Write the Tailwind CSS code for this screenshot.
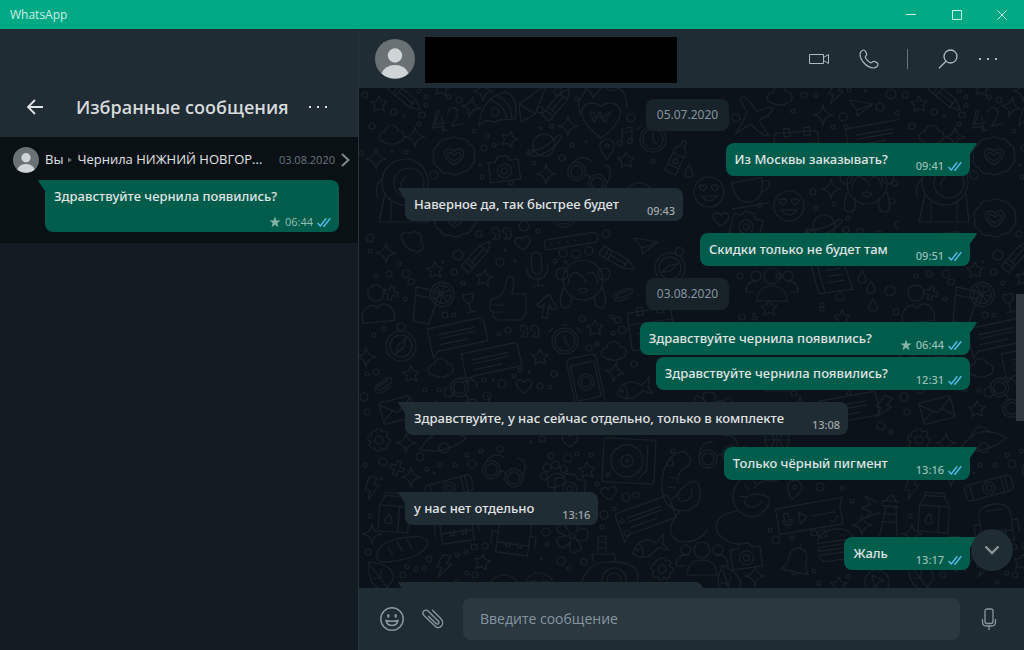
<!DOCTYPE html>
<html lang="ru">

<head>
    <meta charset="UTF-8">
    <meta name="viewport" content="width=device-width, initial-scale=1.0">
    <title>WhatsApp</title>
    <script src="https://cdn.jsdelivr.net/npm/@tailwindcss/browser@4"></script>
</head>

<body class="h-screen flex flex-col overflow-hidden bg-[#111b21] font-['Open_Sans','Noto_Sans',sans-serif] text-[#e1e4e6]">

    <!-- Общие иконки -->
    <svg class="hidden">
        <symbol id="ticks" viewBox="0 0 14 10">
            <path d="M.5 6 3.3 9 9.3 1.2M6.2 8.6 7 9.2 13.3 1.2" fill="none" stroke="#53bdeb" stroke-width="1.4" />
        </symbol>
        <symbol id="star" viewBox="0 0 12 12">
            <path d="M6 .5 7.4 4.5 11.6 4.6 8.3 7.1 9.5 11.2 6 8.8 2.5 11.2 3.7 7.1 .4 4.6 4.6 4.5Z" fill="#86b3a7" />
        </symbol>
        <symbol id="tail-in" viewBox="0 0 7 12">
            <path d="M7 0H1.5Q-.5 0 .6 1.6L7 11Z" fill="currentColor" />
        </symbol>
        <symbol id="tail-out" viewBox="0 0 7 12">
            <path d="M0 0H5.5Q7.5 0 6.4 1.6L0 11Z" fill="currentColor" />
        </symbol>
        <symbol id="avatar" viewBox="0 0 40 40">
            <circle cx="20" cy="16.500" r="7.200" fill="#cfd4d6" />
            <path d="M6.500 34.500Q10 26 20 26T33.500 34.500Q28 39.500 20 39.500T6.500 34.500Z" fill="#cfd4d6" />
        </symbol>
        <symbol id="dots" viewBox="0 0 18 4">
            <path d="M0 1H2V3H0ZM8 1H10V3H8ZM16 1H18V3H16Z" fill="currentColor" />
        </symbol>
    </svg>

    <!-- Заголовок окна -->
    <header class="h-[29px] shrink-0 flex items-center justify-between bg-[#00a884] pl-[10px] text-[#c9efe6]">
        <span class="text-xs">WhatsApp</span>
        <div class="flex items-center">
            <button aria-label="Свернуть" class="w-[46px] h-[29px] flex items-center justify-center">
                <svg width="10" height="10" fill="none" stroke="currentColor"><path d="M0 4.500H10" /></svg>
            </button>
            <button aria-label="Развернуть" class="w-[46px] h-[29px] flex items-center justify-center">
                <svg width="10" height="10" fill="none" stroke="currentColor"><path d="M.5 .5H9.500V9.500H.5Z" /></svg>
            </button>
            <button aria-label="Закрыть" class="w-[44px] h-[29px] flex items-center justify-center">
                <svg width="10" height="10" fill="none" stroke="currentColor"><path d="M.5 .5 9.500 9.500M9.500 .5 .5 9.500" /></svg>
            </button>
        </div>
    </header>

    <div class="flex-1 min-h-0 flex">

        <!-- Избранные сообщения -->
        <aside class="w-[359px] shrink-0 border-r border-[#28343b] flex flex-col bg-[#131c22]">
            <div class="h-[108px] flex items-end bg-[#202c33] pl-[23px] pr-[31px] pb-[18px]">
                <button aria-label="Назад" class="size-6 flex items-center justify-center">
                    <svg width="18" height="16" viewBox="0 0 18 16" fill="none" stroke="#e1e4e6" stroke-width="1.800"><path d="M17 8H2M9 1 2 8 9 15" /></svg>
                </button>
                <h1 class="flex-1 ml-[29px] text-lg leading-6 font-semibold whitespace-nowrap text-[#d6dadc]">Избранные сообщения</h1>
                <button aria-label="Меню" class="h-6 flex items-center"><svg class="w-[18px] h-1"><use href="#dots" /></svg></button>
            </div>

            <div class="bg-[#0a1114] pt-[10px] pb-[11px] pl-[13px] pr-2">
                <div class="flex items-center">
                    <svg class="size-[26px] shrink-0 rounded-full bg-[#6a7175]"><use href="#avatar" /></svg>
                    <span class="ml-[6px] text-[13px]">Вы</span>
                    <svg class="mx-[5px] shrink-0" width="4" height="6" fill="#667781"><path d="M0 .5 4 3 0 5.500Z" /></svg>
                    <span class="flex-1 truncate text-[13px] font-medium">Чернила НИЖНИЙ НОВГОР...</span>
                    <time class="ml-2 text-[11px] text-[#667781]">03.08.2020</time>
                    <svg class="ml-[6px] shrink-0" width="9" height="14" fill="none" stroke="#7d898f" stroke-width="2"><path d="M1 1 7.500 7 1 13" /></svg>
                </div>
                <div class="relative mt-[7px] ml-8 mr-[11px] h-[52px] flex flex-col justify-between rounded-lg rounded-tl-none bg-[#005c4b] pl-[9px] pr-2 pt-[6px] pb-[2px]">
                    <svg class="absolute -left-[7px] top-0 w-[7px] h-3 text-[#005c4b]"><use href="#tail-in" /></svg>
                    <p class="font-['Noto_Sans','Open_Sans',sans-serif] text-[13px] leading-5 font-medium whitespace-nowrap">Здравствуйте чернила появились?</p>
                    <div class="flex items-center justify-end gap-1 text-[11px] leading-4 font-medium text-[#99beb7]">
                        <svg class="size-3"><use href="#star" /></svg>06:44<svg class="w-[14px] h-[10px]"><use href="#ticks" /></svg>
                    </div>
                </div>
            </div>
        </aside>

        <!-- Чат -->
        <main class="flex-1 min-w-0 flex flex-col">
            <div class="h-[59px] shrink-0 flex items-center bg-[#202c33] pl-4 pr-[27px] text-[#aebac1]">
                <svg class="size-10 rounded-full bg-[#6a7175]"><use href="#avatar" /></svg>
                <div class="ml-[10px] mt-[3px] w-[252px] h-[46px] bg-black"></div>
                <div class="ml-auto flex items-center">
                    <button aria-label="Видеозвонок">
                        <svg width="20" height="12" fill="none" stroke="currentColor"><path d="M.5 1.500H14.500V10.500H.5ZM14.500 4.500 19.500 1.500V10.500L14.500 7.500" /></svg>
                    </button>
                    <button aria-label="Звонок" class="ml-[30px]">
                        <svg width="20" height="20" viewBox="0 0 20 20" fill="none" stroke="currentColor" stroke-width="1.200" stroke-linejoin="round"><path d="M4.500 1C3 1 1 3 1 5.500 1.500 12 8 18.500 14.500 19 17 19 19 17 19 15.500 19 14.500 18.500 14 17.800 13.600L15.500 12.500C14.500 12 14 12.300 13.200 13.200 12.500 14 12 14.200 11 13.500 9 12.200 7.500 10.700 6.500 9 5.900 8 6 7.600 7 6.800 7.800 6.200 8 5.500 7.500 4.500L6.400 2.200C6 1.500 5.500 1 4.500 1Z" /></svg>
                    </button>
                    <div class="ml-7 w-px h-5 bg-[#6a767d]"></div>
                    <button aria-label="Поиск" class="ml-[30px]">
                        <svg width="20" height="20" fill="none" stroke="currentColor" stroke-width="1.300"><circle cx="12.500" cy="7.500" r="6.500" /><path d="M8 12.300 1 19.300" /></svg>
                    </button>
                    <button aria-label="Меню чата" class="ml-[21px]"><svg class="w-[18px] h-1"><use href="#dots" /></svg></button>
                </div>
            </div>

            <div class="relative flex-1 min-h-0 overflow-hidden bg-[#0b1219]">
                <svg class="absolute inset-0 size-full" aria-hidden="true">
                    <pattern id="wallpaper" width="540" height="504" patternUnits="userSpaceOnUse">
                        <g id="doodles" fill="none" stroke="#182127" stroke-width="1.200" stroke-linecap="round" stroke-linejoin="round"></g>
                    </pattern>
                    <rect width="100%" height="100%" fill="url(#wallpaper)" />
                </svg>

                <div class="relative flex flex-col gap-3 pt-[11px] pl-[46px] pr-[54px] font-['Noto_Sans','Open_Sans',sans-serif] text-[13px] leading-5 font-medium whitespace-nowrap">
                    <time class="self-center h-8 px-[11px] flex items-center rounded-lg bg-[#182229] text-xs font-normal text-[#8696a0]">05.07.2020</time>

                    <div class="relative self-end h-[33px] flex items-end gap-7 rounded-lg rounded-tr-none bg-[#005c4b] pl-[9px] pr-2 pb-[2px]">
                        <svg class="absolute -right-[7px] top-0 w-[7px] h-3 text-[#005c4b]"><use href="#tail-out" /></svg>
                        <p class="pb-[5px]">Из Москвы заказывать?</p>
                        <div class="flex items-center gap-1 text-[11px] leading-4 text-[#99beb7]">09:41<svg class="w-[14px] h-[10px]"><use href="#ticks" /></svg></div>
                    </div>

                    <div class="relative self-start h-[33px] flex items-end gap-7 rounded-lg rounded-tl-none bg-[#202c33] pl-[9px] pr-2 pb-[2px]">
                        <svg class="absolute -left-[7px] top-0 w-[7px] h-3 text-[#202c33]"><use href="#tail-in" /></svg>
                        <p class="pb-[5px]">Наверное да, так быстрее будет</p>
                        <div class="text-[11px] leading-4 text-[#a3a8ab]">09:43</div>
                    </div>

                    <div class="relative self-end h-[33px] flex items-end gap-7 rounded-lg rounded-tr-none bg-[#005c4b] pl-[9px] pr-2 pb-[2px]">
                        <svg class="absolute -right-[7px] top-0 w-[7px] h-3 text-[#005c4b]"><use href="#tail-out" /></svg>
                        <p class="pb-[5px]">Скидки только не будет там</p>
                        <div class="flex items-center gap-1 text-[11px] leading-4 text-[#99beb7]">09:51<svg class="w-[14px] h-[10px]"><use href="#ticks" /></svg></div>
                    </div>

                    <time class="self-center h-8 px-[11px] flex items-center rounded-lg bg-[#182229] text-xs font-normal text-[#8696a0]">03.08.2020</time>

                    <div class="flex flex-col items-end gap-[2px]">
                        <div class="relative h-[33px] flex items-end gap-7 rounded-lg rounded-tr-none bg-[#005c4b] pl-[9px] pr-2 pb-[2px]">
                            <svg class="absolute -right-[7px] top-0 w-[7px] h-3 text-[#005c4b]"><use href="#tail-out" /></svg>
                            <p class="pb-[5px]">Здравствуйте чернила появились?</p>
                            <div class="flex items-center gap-1 text-[11px] leading-4 text-[#99beb7]"><svg class="size-3"><use href="#star" /></svg>06:44<svg class="w-[14px] h-[10px]"><use href="#ticks" /></svg></div>
                        </div>
                        <div class="h-[33px] flex items-end gap-7 rounded-lg bg-[#005c4b] pl-[9px] pr-2 pb-[2px]">
                            <p class="pb-[5px]">Здравствуйте чернила появились?</p>
                            <div class="flex items-center gap-1 text-[11px] leading-4 text-[#99beb7]">12:31<svg class="w-[14px] h-[10px]"><use href="#ticks" /></svg></div>
                        </div>
                    </div>

                    <div class="relative self-start h-[33px] flex items-end gap-7 rounded-lg rounded-tl-none bg-[#202c33] pl-[9px] pr-2 pb-[2px]">
                        <svg class="absolute -left-[7px] top-0 w-[7px] h-3 text-[#202c33]"><use href="#tail-in" /></svg>
                        <p class="pb-[5px]">Здравствуйте, у нас сейчас отдельно, только в комплекте</p>
                        <div class="text-[11px] leading-4 text-[#a3a8ab]">13:08</div>
                    </div>

                    <div class="relative self-end h-[33px] flex items-end gap-7 rounded-lg rounded-tr-none bg-[#005c4b] pl-[9px] pr-2 pb-[2px]">
                        <svg class="absolute -right-[7px] top-0 w-[7px] h-3 text-[#005c4b]"><use href="#tail-out" /></svg>
                        <p class="pb-[5px]">Только чёрный пигмент</p>
                        <div class="flex items-center gap-1 text-[11px] leading-4 text-[#99beb7]">13:16<svg class="w-[14px] h-[10px]"><use href="#ticks" /></svg></div>
                    </div>

                    <div class="relative self-start h-[33px] flex items-end gap-7 rounded-lg rounded-tl-none bg-[#202c33] pl-[9px] pr-2 pb-[2px]">
                        <svg class="absolute -left-[7px] top-0 w-[7px] h-3 text-[#202c33]"><use href="#tail-in" /></svg>
                        <p class="pb-[5px]">у нас нет отдельно</p>
                        <div class="text-[11px] leading-4 text-[#a3a8ab]">13:16</div>
                    </div>

                    <div class="relative self-end h-[33px] flex items-end gap-7 rounded-lg rounded-tr-none bg-[#005c4b] pl-[9px] pr-2 pb-[2px]">
                        <svg class="absolute -right-[7px] top-0 w-[7px] h-3 text-[#005c4b]"><use href="#tail-out" /></svg>
                        <p class="pb-[5px]">Жаль</p>
                        <div class="flex items-center gap-1 text-[11px] leading-4 text-[#99beb7]">13:17<svg class="w-[14px] h-[10px]"><use href="#ticks" /></svg></div>
                    </div>

                    <div class="relative self-start w-[298px] h-[33px] rounded-lg rounded-tl-none bg-[#202c33]">
                        <svg class="absolute -left-[7px] top-0 w-[7px] h-3 text-[#202c33]"><use href="#tail-in" /></svg>
                    </div>
                </div>

                <!-- Полоса прокрутки и кнопка вниз -->
                <div class="absolute right-0 top-[206px] w-2 h-[127px] bg-[#31383e]"></div>
                <button aria-label="Вниз" class="absolute right-[11px] bottom-[17px] size-[42px] rounded-full bg-[#202c33] shadow flex items-center justify-center">
                    <svg width="16" height="10" fill="none" stroke="#8c9398" stroke-width="2.400"><path d="M1.500 1.500 8 8 14.500 1.500" /></svg>
                </button>
            </div>

            <!-- Ввод сообщения -->
            <form class="h-[62px] shrink-0 flex items-center bg-[#202c33] pl-[21px] pr-[27px] text-[#8696a0]">
                <button type="button" aria-label="Смайлики">
                    <svg width="24" height="24" viewBox="0 0 24 24" fill="none" stroke="currentColor" stroke-width="1.500"><circle cx="12" cy="12" r="11.200" /><ellipse cx="8.300" cy="8.800" rx="1.300" ry="1.900" fill="currentColor" stroke="none" /><ellipse cx="15.700" cy="8.800" rx="1.300" ry="1.900" fill="currentColor" stroke="none" /><path d="M6 13.500Q12 15.200 18 13.500 17 18.500 12 18.500T6 13.500Z" /></svg>
                </button>
                <button type="button" aria-label="Прикрепить" class="ml-[18px]">
                    <svg width="22" height="20" viewBox="0 0 22 20" fill="none" stroke="currentColor" stroke-width="1.400" stroke-linecap="round"><path d="M10.500 1.300 19.200 10C21 12 21.200 15 19.500 17 17.500 19 14.800 18.800 13 17L2 6.500C.6 5 .7 3.200 1.800 2.100 3 1 5 1 6.300 2.200L16.200 12C17 12.800 17.200 13.800 16.500 14.600 15.700 15.300 14.600 15.200 13.700 14.300L6.500 7.200" /></svg>
                </button>
                <input type="text" aria-label="Сообщение" placeholder="Введите сообщение"
                    class="ml-[19px] flex-1 min-w-0 h-[42px] rounded-lg bg-[#2b3840] px-[17px] pb-[2px] text-[14px] placeholder:text-[#8696a0] focus:outline-none">
                <button type="button" aria-label="Голосовое сообщение" class="ml-[21px]">
                    <svg width="16" height="22" viewBox="0 0 16 22" fill="none" stroke="currentColor" stroke-width="1.300"><rect x="4" y="1" width="8" height="14.500" rx="2" /><path d="M1.500 11V14Q1.500 18 5.500 18H10.500Q14.500 18 14.500 14V11M8 18V22" /></svg>
                </button>
            </form>
        </main>
    </div>

    <script>
        // Фигуры фона, центр каждой в точке 0,0
        const shapes = {
            star: '<path d="M0-8 2.500-3 8-2.500 4 1.500 5.500 7 0 4.500-5 7.500-4 2-8-2-2.500-3Z"/>',
            sparkle: '<path d="M0-10Q1-1 10 0 1 1 0 10-1 1-10 0-1-1 0-10Z"/>',
            heart: '<path d="M0 7C-14-2-6-10 0-4 6-10 14-2 0 7Z"/>',
            cloud: '<path d="M-8 8C-16 6-13-3-7-2-6-11 6-10 6-3 14-4 14 8 7 8 4 11-4 11-8 8Z"/>',
            camera: '<path d="M-15-7H-8L-5-12H4L7-7H15V13H-15Z"/><circle r="7" cy="3"/><circle r="3" cy="3"/>',
            badge: '<path d="M-6-17Q0-21 6-17 13-18 15-12 22-9 20-2 23 5 17 10 15 16 8 16 2 21-5 17-12 19-15 12-22 9-20 1-23-6-16-11-13-18-6-17Z"/><path d="M0 9C-17-1-8-12 0-5 8-12 17-1 0 9ZM0 5C-11-1-6-7 0-1 6-7 11-1 0 5Z"/>',
            fortytwo: '<path d="M-6-10-13 3H-3M-5-3V11M2-6Q7-14 12-7 13-2 3 8H14M-9-10-16 6H-7V11H-2"/>',
            planet: '<circle r="11"/><path d="M-10 4Q-22 10-17 3M10-4Q22-10 17-3 5 10-12 9-18 8-16 2M-17 3Q-2 6 16-7"/>',
            fire: '<path d="M0 28C-34 4-16-14 0-4 16-14 34 4 0 28ZM-21 4C-26-14-16-12-15-22-8-16-8-12-8-12-4-16-2-22 6-28 4-20 8-18 14-20 20-26 26-14 26-2 22 6"/><path d="M-11 2-7 12-1 6 4 12 10 2 6 4 3 8-1 2-6 8-7 2Z"/>',
            clock: '<circle r="13"/><circle r="10"/><path d="M0-6V1L4 5M-3-16H3M-12-13-16-9M12-13 16-9"/>',
            bottle: '<path d="M-6 16V-6Q-6-11-2-12V-18H2V-12Q6-11 6-6V16ZM-6-3H6M-6 9H6M0 0Q5 6 0 6T0 0"/>',
            glasses: '<circle cx="-12" cy="4" r="9"/><circle cx="12" cy="4" r="9"/><circle cx="-12" cy="4" r="6"/><circle cx="12" cy="4" r="6"/><path d="M-3 3Q0 0 3 3M-20-1Q-16-15-4-12M20-1Q20-17 9-16"/>',
            pin: '<path d="M0 10Q-11-3-5-8 0-12 5-8 11-3 0 10Z"/><circle r="2" cy="-3"/>',
            note: '<path d="M-3 6V-8L7-10V4M-3-4 7-6"/><circle cx="-5" cy="6" r="2.500"/><circle cx="5" cy="4" r="2.500"/>',
            drop: '<path d="M0-6Q8 6 0 6T0-6Z"/>',
            helmet: '<circle r="23"/><circle r="15" cx="4" cy="1"/><path d="M0-5Q-5 0-4 5M-20 12-26 40H24L21 12M-14 20V40M12 20V40M-22-4Q-32 4-27 16"/>',
            rocket: '<path d="M-20 16Q-18-12 6-18 20-14 16 10 4 8-6 12-14 8-20 16ZM-8-10Q6-4 8 9M-2-14Q12-8 13 8"/><circle cx="-4" cy="2" r="4"/>',
            slice: '<path d="M-10 16-12-2 16-22 4 8ZM-12-2 4 8"/>',
            plane: '<path d="M-18 18Q-8 4-6-4-16-20-10-20-2-14 4-4 14-10 20-8 18 0 6 4 12 14 16 20 8 20-2 8Z"/>',
            paper: '<path d="M-12-8 12-4-4 8-4 2ZM-4 2 12-4"/>',
            bolt: '<path d="M-3-11H5L2-3H7L-4 12-2 2H-7Z"/>',
            calendar: '<rect x="-22" y="-16" width="44" height="38" rx="3"/><path d="M-22-4H22M-12-20V-12H-6V-20ZM8-20V-12H14V-20ZM-14 6H14M-14 14H8"/>',
            bubble: '<path d="M-28-12H26Q29-12 29-8V12H-22L-28 18V-8Q-28-12-24-12Z"/><path d="M-18-4H18M-18 0H18M-18 6H10"/>',
            cup: '<path d="M-16-8H14Q14 14-1 14T-16-8ZM14-4Q24-6 20 2 16 6 11 6M-20 18H16"/>',
            smile: '<circle r="15"/><path d="M-8 4Q0 14 8 4ZM-6-1C-13-6-8-9-6-6-4-9 1-6-6-1ZM6-1C-1-6 4-9 6-6 8-9 13-6 6-1Z"/>',
            monkey: '<circle r="20"/><path d="M-15 4Q-12-12-4-6T2 2M15 4Q12-12 4-6M-20 8Q-26 28-18 28T-12 14M20 8Q26 28 18 28T12 14M-5 10Q0 6 5 10-1 16-5 10Z"/><circle cx="-21" cy="-6" r="6"/><circle cx="21" cy="-6" r="6"/>',
            pencil: '<path d="M-18-5H10L20 0 10 5H-18ZM-12-5V5M-8-5V5M10-5V5M-8 0H10"/>',
            tube: '<rect x="-27" y="-5" width="54" height="10" rx="4"/><path d="M-20 0H-19M-12 0H-11M-4 0H-3M4 0H5"/>',
            quotes: '<path d="M-3 6Q-1 0-3-3-6-8-10-4-11 0-6 1-5 3-9 6ZM8 6Q10 0 8-3 5-8 1-4 0 0 5 1 6 3 2 6Z"/>',
            mic: '<rect x="-5" y="-16" width="10" height="22" rx="5"/><path d="M-11-2Q-10 11 0 11T11-2M0 11V18M-5 18H5"/>',
            thumb: '<path d="M-10-2Q-2-6 0-22 6-26 7-18L5-6H18Q22 14 14 20H-8Q-16 18-13 12-20 10-16 5-20 0-10-2ZM-13 5H-4M-12 12H-4"/>',
            arrow: '<path d="M-10 0 0-12 10 0 6 3 2-2V12H-3V-2L-6 3Z"/>',
            drink: '<path d="M-12-14H12L8 20H-8ZM-11-6H11"/><circle cx="15" cy="-12" r="12"/><circle cx="15" cy="-12" r="9"/><path d="M15-21V-3M6-12H24M9-18 21-6M21-18 9-6"/>',
            person: '<circle r="8" cy="-11"/><path d="M-16 18V10Q-12-1-4 1L0 4 4 1Q12-1 16 10V18Z"/>',
            people: '<circle r="8" cy="-12"/><path d="M-15 13Q-14-2 0-2T15 13ZM-18 4H-26Q-26-8-14-7M18 4H26Q26-8 14-7"/><circle r="5" cx="-16" cy="-12"/><circle r="5" cx="16" cy="-12"/>',
            plus: '<path d="M-2-7H2V-2H7V2H2V7H-2V2H-7V-2H-2Z"/>',
            glass: '<path d="M-5-8H5Q5 1 0 1T-5-8ZM0 1V10M-4 10H4"/>',
            compass: '<circle r="15"/><circle r="11"/><circle r="4" cy="-19"/><path d="M5-8 2 2-5 8-2-2Z"/>',
            phone: '<rect x="-15" y="-26" width="30" height="52" rx="4"/><rect x="-12" y="-19" width="24" height="36"/><circle r="8"/><circle r="5"/>',
            clip: '<path d="M-9-3H7Q11 0 7 3H-7Q-10 1-7-1H6M-9-3Q-14 2-8 6H4"/>',
            envelope: '<rect x="-16" y="-11" width="32" height="22" rx="2"/><path d="M-16-9 0 3 16-9M-16 9-5 0M16 9 5 0"/>',
            gear: '<circle r="4"/><path d="M-2-11H2L3-8 7-9 9-6 7-3 11-1V3L8 4 8 8 5 10 2 8 0 11H-3L-4 8-8 8-10 5-8 2-11 0V-4L-8-4-7-8-4-9Z"/>',
            book: '<path d="M-18-16H14L20 14H-14ZM-12-16-8 14M-4-8H10M-3-2H12M-2 4H13"/>',
            saucer: '<path d="M-24 4Q0-20 24 4 0 16-24 4ZM-10-5Q0-22 10-5"/><circle r="5" cy="8"/>',
            scroll: '<rect x="-24" y="-8" width="48" height="16" rx="4"/><path d="M-18-8V8M18-8V8M14-8V8"/><circle r="6"/><circle r="3"/>',
            milk: '<path d="M-15-8-10-18H9L15-8V18H-15ZM-15-8H15M5-8V18M-10-18V-21H9V-18M-5 0Q2 10-5 10T-5 0Z"/>',
            backpack: '<path d="M-16 18V-8Q-16-20 0-20T16-8V18ZM-16 8H16M-8-14H8M-22 10V-2H-16M22 10V-2H16M-7 6V11H-3V6M5 6V11H9V6"/>',
            paw: '<path d="M-9 10Q-9-1 0-1T9 10Q0 14-9 10Z"/><circle cx="-10" cy="-2" r="3.500"/><circle cx="-4" cy="-9" r="4"/><circle cx="5" cy="-9" r="4"/><circle cx="11" cy="-2" r="3.500"/>',
            turntable: '<rect x="-26" y="-22" width="52" height="44" rx="3"/><circle r="16" cx="-2"/><circle r="6" cx="-2"/><circle r="1" cx="-2"/><path d="M18-12V8L12 16M18-16V-12"/><circle cx="-20" cy="15" r="2"/>',
            flower: '<circle r="3"/><path d="M-3-4Q-10-16 0-16T4-4Q16-12 16-2T4 3Q14 14 4 16T-1 5Q-10 16-14 8T-5 0Q-18-4-14-10T-3-4Z"/>',
            fish: '<path d="M-18 3Q-6-14 8-1L17-8 14 1 18 9 8 4Q-6 16-18 3ZM-9-4Q-5 2-9 8"/><circle cx="-12" cy="1" r="1"/>',
            guitar: '<path d="M-30 20Q-24-6-4-6 28-8 28 10 24 30-8 30T-30 20ZM-16-6-18-14H4L6-6M-12-14V-32H-4V-14M-12-26H-4M-12-20H-4"/><circle cx="4" cy="12" r="12"/><circle cx="4" cy="12" r="7"/>',
            bread: '<path d="M-26 6Q-26-10 6-10 28-10 26 0 20 12-14 12-26 12-26 6ZM-14-3 -10 5M-4-7 0 3M6-8 10 2"/>',
            leaf: '<path d="M-12-14Q14-12 12 4L4 14Q-14 12-12-14ZM-10-10 10 16M0 2V-6M0 2H-8"/>',
            dragon: '<path d="M0-40Q-20-36-22-10T-4 20Q16 20 16 2T2-6Q-10 2-4 10 8 12 8-2M0-40Q12-30 2-24T-6-8M-4 20Q-22 40-6 50 14 54 24 38M-14-14-8-12M-16-4-9-3M-12 8-7 4"/>',
            ball: '<circle r="12"/><path d="M-12 0H12M0-12V12M-8-9Q2 0-8 9M8-9Q-2 0 8 9"/>',
            voice: '<path d="M-34-12H34L30-4V14H-34Z"/><path d="M-12-5V7L-4 1ZM0 1H24M18 9 21 11 26 5"/><rect x="-27" y="-6" width="5" height="9" rx="2"/><path d="M-29 1Q-29 6-24 6T-20 1M-24 6V9"/>',
            tower: '<path d="M-8 20-4-12H6L10 20ZM-8-12H10V-17H-8ZM-4-17Q0-28 6-17M-6 4H8M-5-4H7M-12-14-26-20-20-12-28-8-18-4-24 2-10-4"/>',
            burger: '<path d="M-18-4Q-16-16 0-16T18-4ZM-18 0H18V4H-18ZM-18 8H18Q18 15 10 15H-10Q-18 15-18 8ZM-8-10H-7M0-12H1M7-9H8"/>',
            bell: '<path d="M-14 10Q-8 4-9-4-8-14 0-14T9-4Q8 4 14 10ZM-4 10Q0 16 4 10M0-14V-18"/>',
            cursor: '<circle r="12"/><path d="M-5-7 7-1 1 1-2 7Z"/>'
        };

        // [фигура, x, y, поворот]
        const placed = [
            ['star', 20, 16, 0], ['pencil', 46, 9, 40], ['star', 83, 0, 10], ['sparkle', 124, 3, 0], ['fortytwo', 88, 31, -12],
            ['sparkle', 112, 19, 10], ['rocket', 140, 22, 0], ['slice', 172, 18, 0], ['pencil', 198, 16, -50], ['fire', 242, 22, 0],
            ['cloud', 33, 46, 0], ['sparkle', 56, 49, 0], ['badge', 95, 68, 0], ['star', 150, 51, 20], ['planet', 185, 57, -10],
            ['camera', 145, 80, -8], ['sparkle', 209, 38, 0], ['pin', 248, 61, 0], ['note', 266, 49, 0], ['clock', 294, 51, 0],
            ['bottle', 318, 70, 25], ['star', 267, 72, 0], ['drop', 330, 83, 0], ['glasses', 230, 86, 30], ['sparkle', 187, 86, 0],
            ['sparkle', 17, 71, 0], ['helmet', 46, 94, 0], ['plane', 394, 28, 0], ['cloud', 421, 7, 0], ['bolt', 477, 5, 10],
            ['calendar', 438, 60, -4], ['sparkle', 464, 27, 0], ['paper', 502, 20, 0], ['bubble', 516, 48, -10], ['cup', 390, 100, -10],
            ['smile', 430, 118, 0], ['sparkle', 472, 101, 0], ['monkey', 508, 96, 0], ['smile', 350, 104, 0],
            ['heart', 362, 131, 0], ['camera', 388, 136, 15], ['planet', 465, 138, 0], ['smile', 280, 110, 0],
            ['clock', 205, 126, 0], ['cloud', 55, 152, 40], ['badge', 96, 130, 0], ['sparkle', 27, 165, 0], ['pencil', 118, 168, -48],
            ['quotes', 143, 145, 0], ['heart', 164, 155, -10], ['tube', 212, 153, -9], ['pencil', 258, 171, 30], ['paper', 287, 158, 0],
            ['star', 76, 182, 0], ['star', 125, 190, 10], ['mic', 178, 180, -5], ['monkey', 224, 192, 0], ['thumb', 148, 212, 0],
            ['arrow', 188, 218, 10], ['drink', 66, 215, 12], ['person', 18, 216, -6], ['plus', 32, 205, 15], ['glass', 110, 214, -10],
            ['compass', 311, 180, 30], ['clip', 265, 205, -20], ['bubble', 98, 247, -12], ['compass', 42, 258, 0], ['quotes', 171, 243, 0],
            ['clock', 206, 253, 0], ['star', 236, 240, 0], ['bubble', 132, 272, -12], ['star', 181, 269, 0], ['sparkle', 7, 269, 0],
            ['cloud', 82, 279, 0], ['star', 52, 286, 0], ['clip', 25, 296, -35], ['heart', 165, 298, 0], ['phone', 227, 294, -12],
            ['cloud', 255, 262, 0], ['sparkle', 256, 284, 10], ['glasses', 110, 308, 60], ['fish', 275, 300, -10], ['people', 413, 200, 0],
            ['book', 472, 190, -8], ['drop', 503, 189, 0], ['drop', 512, 199, 0], ['drop', 514, 217, 0], ['star', 410, 220, 0],
            ['star', 483, 230, 0], ['calendar', 292, 238, -8], ['camera', 420, 290, 0], ['bubble', 490, 320, -10], ['bolt', 525, 319, 20],
            ['envelope', 38, 322, -14], ['gear', 20, 352, 0], ['star', 78, 321, 0], ['sparkle', 441, 318, 0], ['flower', 350, 320, 0],
            ['sparkle', 47, 355, 0], ['saucer', 83, 352, -14], ['glasses', 145, 382, 20], ['scroll', 90, 400, -15], ['bolt', 13, 400, 0],
            ['plus', 38, 380, 20], ['sparkle', 52, 389, 0], ['milk', 35, 426, 4], ['backpack', 97, 436, -8], ['backpack', 155, 448, 8],
            ['paw', 195, 387, -20], ['camera', 211, 398, 5], ['star', 228, 382, 0], ['turntable', 270, 373, 3], ['heart', 250, 405, -10],
            ['heart', 211, 352, 0], ['bubble', 286, 428, -20], ['flower', 213, 448, 0], ['fish', 290, 458, -15], ['guitar', 251, 480, 0],
            ['gear', 303, 481, 0], ['bread', 43, 460, -8], ['star', 123, 474, 10], ['bolt', 85, 478, 10], ['leaf', 22, 488, 0],
            ['sparkle', 13, 446, 0], ['dragon', 325, 403, 0], ['glasses', 360, 365, -10], ['ball', 418, 352, 0], ['dragon', 395, 410, 40],
            ['pin', 435, 402, 15], ['voice', 452, 427, -10], ['tower', 530, 430, 5], ['burger', 477, 457, -8], ['camera', 387, 467, -8],
            ['bell', 438, 474, 12], ['sparkle', 396, 488, 0], ['sparkle', 503, 437, 0], ['people', 343, 474, 0], ['cursor', 518, 494, 0],
            ['star', 480, 497, 0], ['leaf', 370, 495, 20], ['smile', 145, 502, 0], ['smile', 180, 500, 0]
        ];

        // Кружки между фигурами: [x, y, r]
        const dots = [
            [6, 7, 3], [60, 3, 2], [67, 9, 2], [67, 17, 2], [35, 24, 3], [45, 28, 1], [63, 27, 3], [90, 9, 2], [100, 12, 3], [13, 38, 3],
            [33, 63, 1], [47, 64, 2], [2, 65, 2], [60, 36, 2], [75, 87, 4], [125, 60, 3], [135, 57, 2], [115, 43, 2], [128, 48, 2], [181, 22, 3],
            [199, 4, 4], [218, 11, 2], [193, 38, 2], [182, 40, 1], [203, 70, 3], [175, 75, 2], [213, 57, 2], [227, 54, 1], [272, 30, 4], [152, 95, 2],
            [121, 77, 1], [123, 89, 2], [294, 73, 2], [377, 30, 4], [434, 23, 2], [445, 7, 3], [457, 7, 2], [490, 2, 2], [532, 6, 5], [484, 29, 4],
            [474, 39, 2], [487, 39, 2], [521, 19, 4], [506, 3, 1], [538, 25, 2], [454, 104, 3], [457, 120, 2], [475, 116, 2], [536, 95, 3], [533, 113, 3],
            [489, 130, 2], [401, 117, 2], [11, 150, 4], [11, 163, 2], [40, 176, 2], [30, 186, 3], [47, 186, 4], [17, 188, 2], [52, 194, 3], [99, 167, 5],
            [95, 184, 3], [84, 174, 1], [141, 174, 4], [156, 173, 1], [146, 162, 1], [165, 138, 5], [179, 143, 2], [120, 146, 3], [204, 165, 4], [217, 166, 4],
            [230, 163, 4], [247, 146, 4], [196, 173, 2], [207, 174, 1], [104, 195, 2], [86, 227, 3], [95, 227, 2], [46, 211, 2], [25, 241, 2], [15, 247, 2],
            [140, 246, 2], [149, 242, 3], [223, 231, 3], [253, 229, 2], [259, 232, 3], [230, 260, 3], [238, 256, 2], [263, 242, 4], [254, 245, 2], [161, 282, 2],
            [155, 288, 2], [170, 284, 1], [195, 286, 3], [181, 298, 3], [143, 296, 4], [125, 292, 2], [134, 292, 1], [90, 304, 5], [80, 302, 2], [66, 302, 2],
            [17, 284, 3], [8, 286, 2], [5, 309, 4], [8, 324, 3], [128, 308, 4], [191, 299, 2], [275, 276, 3], [381, 188, 3], [420, 188, 3], [383, 229, 3],
            [396, 230, 2], [395, 226, 1], [481, 209, 4], [463, 217, 2], [463, 221, 2], [531, 203, 5], [537, 224, 3], [520, 146, 3], [540, 137, 4], [501, 143, 3],
            [487, 142, 3], [370, 314, 4], [362, 315, 2], [435, 305, 3], [490, 305, 2], [545, 320, 3], [522, 338, 4], [532, 344, 2], [6, 377, 2], [24, 374, 4],
            [61, 369, 4], [68, 381, 2], [75, 385, 1], [81, 377, 2], [96, 377, 2], [113, 376, 4], [22, 391, 1], [108, 367, 2], [122, 363, 2], [141, 361, 3],
            [172, 354, 1], [183, 351, 3], [192, 368, 3], [209, 370, 4], [218, 366, 2], [232, 367, 2], [238, 396, 2], [245, 427, 4], [255, 421, 2], [267, 409, 4],
            [277, 407, 3], [263, 433, 2], [268, 445, 3], [243, 439, 2], [314, 363, 2], [311, 375, 3], [187, 444, 4], [188, 456, 2], [182, 471, 1], [202, 473, 4],
            [210, 480, 2], [225, 474, 3], [9, 464, 3], [11, 428, 2], [70, 471, 3], [65, 480, 2], [57, 481, 2], [48, 479, 2], [44, 487, 3], [98, 467, 2],
            [107, 464, 2], [115, 459, 3], [126, 458, 3], [108, 485, 2], [116, 487, 3], [98, 494, 2], [385, 359, 1], [461, 399, 4], [471, 389, 3], [483, 400, 2],
            [493, 413, 2], [411, 442, 2], [417, 452, 4], [433, 450, 2], [455, 445, 3], [463, 446, 4], [552, 428, 2], [455, 483, 2], [460, 495, 2], [489, 488, 2]
        ];

        const doodles = document.getElementById('doodles');
        let markup = '';
        placed.forEach(([name, x, y, turn]) =>
        {
            markup += `<g transform="translate(${x} ${y}) rotate(${turn})">${shapes[name]}</g>`;
            // Повтор фигур, выходящих за левый край плитки
            if (x < 30)
            {
                markup += `<g transform="translate(${x + 540} ${y}) rotate(${turn})">${shapes[name]}</g>`;
            }
        });
        dots.forEach(([x, y, r]) =>
        {
            markup += `<circle cx="${x}" cy="${y}" r="${r}"/>`;
        });
        doodles.innerHTML = markup;
    </script>
</body>

</html>
